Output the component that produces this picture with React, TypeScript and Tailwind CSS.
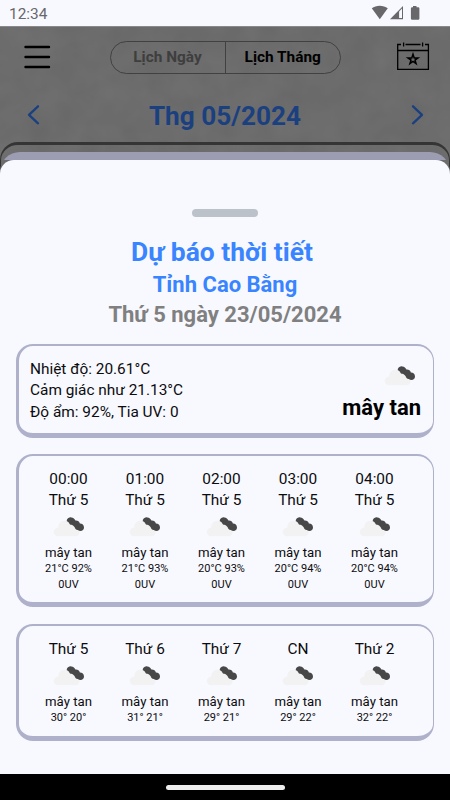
import React from "react";

const hours = [
  { time: "00:00", temp: "21°C 92%" },
  { time: "01:00", temp: "21°C 93%" },
  { time: "02:00", temp: "20°C 93%" },
  { time: "03:00", temp: "20°C 94%" },
  { time: "04:00", temp: "20°C 94%" },
];

const days = [
  { day: "Thứ 5", temp: "30° 20°" },
  { day: "Thứ 6", temp: "31° 21°" },
  { day: "Thứ 7", temp: "29° 21°" },
  { day: "CN", temp: "29° 22°" },
  { day: "Thứ 2", temp: "32° 22°" },
];

function Clouds() {
  return (
    <svg width="32" height="20" viewBox="0 0 32 20" className="block shrink-0">
      <path
        d="M5.3 19.2C2.6 19.2 .8 17.3 .8 14.9C.8 12.5 2.8 10.6 5.2 10.7C5.1 6.5 8 3.8 11.3 3.8C13.6 3.8 15.4 4.8 16.3 6.8C18.7 6.2 21.2 7.7 21.9 10.2C24.7 10 26.7 12.2 26.7 14.7C26.7 17.4 24.7 19.2 22.4 19.2Z"
        fill="#f2f2f2"
      />
      <path
        d="M13.8 3C14.6 1 16.6 .1 18.3 .4C20.3 .4 21.8 1.7 22.4 3.6C24.5 3.3 26.4 4.6 26.9 6.6C29.1 6.5 31 8.2 31 10.5C31 12.5 29.4 14 27.5 14C26.4 14 25.5 13.6 24.9 12.9C23.5 13.1 22.2 12.2 21.8 10.6C21.2 9.4 20.2 8.4 18.4 7.8C17.4 7.8 16.6 7.2 16.2 6.2C15.7 5.1 14.7 4.5 13.8 4.2Z"
        fill="#484848"
      />
    </svg>
  );
}

function Card({ children, className }: { children: React.ReactNode; className: string }) {
  return (
    <section
      className={`mx-4 rounded-[17px] border-t-2 border-r border-b-[5px] border-l-[3px] border-[#afb1ca] ${className}`}
    >
      {children}
    </section>
  );
}

function StatusBar() {
  return (
    <div className="flex h-[26px] shrink-0 items-center bg-[#f8f9ff] pl-[9px] text-[15.4px] leading-[26px] text-[#68686b]">
      <span className="pt-[2px]">12:34</span>
      <svg width="50" height="26" viewBox="0 0 50 26" className="ml-auto mr-[29px]" fill="#68686b">
        <path d="M.8 8.3C5 4.9 12.4 4.9 16.8 8.3L8.8 19.2Z" />
        <path d="M19 19.2L32 6V19.2Z" />
        <path d="M28.1 11.5L31 8.6V18H28.1Z" fill="#f8f9ff" />
        <path d="M42 6H45.5V7.2H47.2Q48.4 7.2 48.4 8.4V18.5Q48.4 19.8 47.2 19.8H41.1Q39.9 19.8 39.9 18.5V8.4Q39.9 7.2 41.1 7.2H42Z" />
      </svg>
    </div>
  );
}

export default function App() {
  return (
    <div className="relative flex h-[800px] w-[450px] flex-col overflow-hidden bg-[#6c6c6c] font-['Roboto','Noto_Sans',sans-serif] text-[#0c0c0e]">
      <svg className="absolute top-[26px] left-0" width="450" height="150">
        <filter id="stone" x="0" y="0" width="100%" height="100%" colorInterpolationFilters="sRGB">
          <feTurbulence type="fractalNoise" baseFrequency=".035" numOctaves="3" seed="8" />
          <feColorMatrix values="0.04 0 0 0 .403 0.04 0 0 0 .403 0.04 0 0 0 .403 0 0 0 0 1" />
        </filter>
        <rect width="450" height="150" filter="url(#stone)" />
      </svg>
      <div className="relative flex flex-1 flex-col">
        <StatusBar />
        <header className="flex h-[62px] shrink-0 items-center border-t border-[#898989] pr-[20px] pl-[24px]">
          <svg width="27" height="24" viewBox="0 0 27 24" stroke="#000" strokeWidth="2.4" strokeLinecap="round" className="-mt-px">
            <path d="M1.5 2H25M1.5 12H25M1.5 22H25" />
          </svg>
          <div className="-mt-px ml-[58.5px] flex h-[33px] w-[231.5px] overflow-hidden rounded-full border border-[#414141] text-[15.4px] font-bold">
            <span className="flex w-[115px] items-center justify-center border-r border-[#414141] pt-[2px] text-[#3e3e3e]">Lịch Ngày</span>
            <span className="flex flex-1 items-center justify-center pt-[2px] text-black">Lịch Tháng</span>
          </div>
          <svg width="34" height="30" viewBox="0 0 34 30" fill="none" stroke="#000" strokeWidth="1.3" className="-mt-[3px] ml-auto">
            <path d="M5 3.5H1.7V28.4H32.4V3.5H29M9.5 3.5H24.5M1.7 9.5H32.4M7.6 1.5V5.5M26.6 1.5V5.5" />
            <path d="M17 13.2L18.2 16.9H22L19 19.1L20.1 22.7L17 20.5L13.9 22.7L15 19.1L12 16.9H15.8Z" strokeWidth="1.5" />
          </svg>
        </header>
        <div className="flex h-[54px] shrink-0 items-center justify-between pr-[24.5px] pl-[25.5px] font-bold text-[#1b4080]">
          <svg width="15" height="22" viewBox="0 0 15 22" fill="none" stroke="currentColor" strokeWidth="2.3" strokeLinecap="round" strokeLinejoin="round">
            <path d="M12 2.3L3 10.8L12 19.3" />
          </svg>
          <h1 className="pt-[3px] pr-px text-[26.2px]">Thg 05/2024</h1>
          <svg width="15" height="22" viewBox="0 0 15 22" fill="none" stroke="currentColor" strokeWidth="2.3" strokeLinecap="round" strokeLinejoin="round">
            <path d="M3 2.3L12 10.8L3 19.3" />
          </svg>
        </div>
        <div className="flex flex-1 flex-col rounded-t-[18px] border-t-[3px] border-r border-l border-[#353535] pt-[7px]">
          <div className="-mx-px flex flex-1 flex-col rounded-t-[20px] bg-linear-to-b from-[#9c9cb3] from-[8px] to-[#6c6c6c] to-[8px] pt-2">
            <main className="flex flex-1 flex-col rounded-t-[14px] bg-[#f8f9ff]">
              <div className="mx-auto mt-[49px] h-2 w-[66px] shrink-0 rounded-full bg-[#bbc2c9]" />
              <div className="mt-[17px] text-center font-bold">
                <h2 className="pr-[6px] text-[26.4px] leading-[36px] text-[#3984ff]">Dự báo thời tiết</h2>
                <h3 className="text-[22px] leading-[30px] text-[#3984ff]">Tỉnh Cao Bằng</h3>
                <p className="text-[22px] leading-[30px] text-[#808080]">Thứ 5 ngày 23/05/2024</p>
              </div>
              <Card className="mt-[14px] flex h-[94px] justify-between pr-3 pl-[11px]">
                <div className="pt-[13px] text-[15.4px] leading-[21.3px]">
                  <p>Nhiệt độ: 20.61°C</p>
                  <p>Cảm giác như 21.13°C</p>
                  <p>Độ ẩm: 92%, Tia UV: 0</p>
                </div>
                <div className="flex flex-col items-end pt-5">
                  <div className="mr-[5px]"><Clouds /></div>
                  <strong className="mt-[9px] text-[22px] leading-[26px] text-black">mây tan</strong>
                </div>
              </Card>
              <Card className="mt-4 flex h-[153px] pt-[13px] pl-[11.25px]">
                {hours.map((h) => (
                  <div key={h.time} className="flex w-[76.5px] flex-col items-center text-[15.4px] leading-[21px]">
                    <span>{h.time}</span>
                    <span>Thứ 5</span>
                    <div className="mt-[6px]"><Clouds /></div>
                    <span className="mt-[7px] text-[13.2px] leading-[17px]">mây tan</span>
                    <span className="text-[11px] leading-[16px]">{h.temp}</span>
                    <span className="text-[11px] leading-[15px]">0UV</span>
                  </div>
                ))}
              </Card>
              <Card className="mt-[17px] flex h-[117px] pt-[13px] pl-[11.25px]">
                {days.map((d) => (
                  <div key={d.day} className="flex w-[76.5px] flex-col items-center text-[15.4px] leading-[21px]">
                    <span>{d.day}</span>
                    <div className="mt-[6px]"><Clouds /></div>
                    <span className="mt-[7px] text-[13.2px] leading-[17px]">mây tan</span>
                    <span className="text-[11px] leading-[16px]">{d.temp}</span>
                  </div>
                ))}
              </Card>
            </main>
          </div>
        </div>
        <footer className="flex h-[26px] shrink-0 items-center justify-center bg-black">
          <div className="h-[5px] w-[119px] rounded-full bg-[#ededed]" />
        </footer>
      </div>
    </div>
  );
}
